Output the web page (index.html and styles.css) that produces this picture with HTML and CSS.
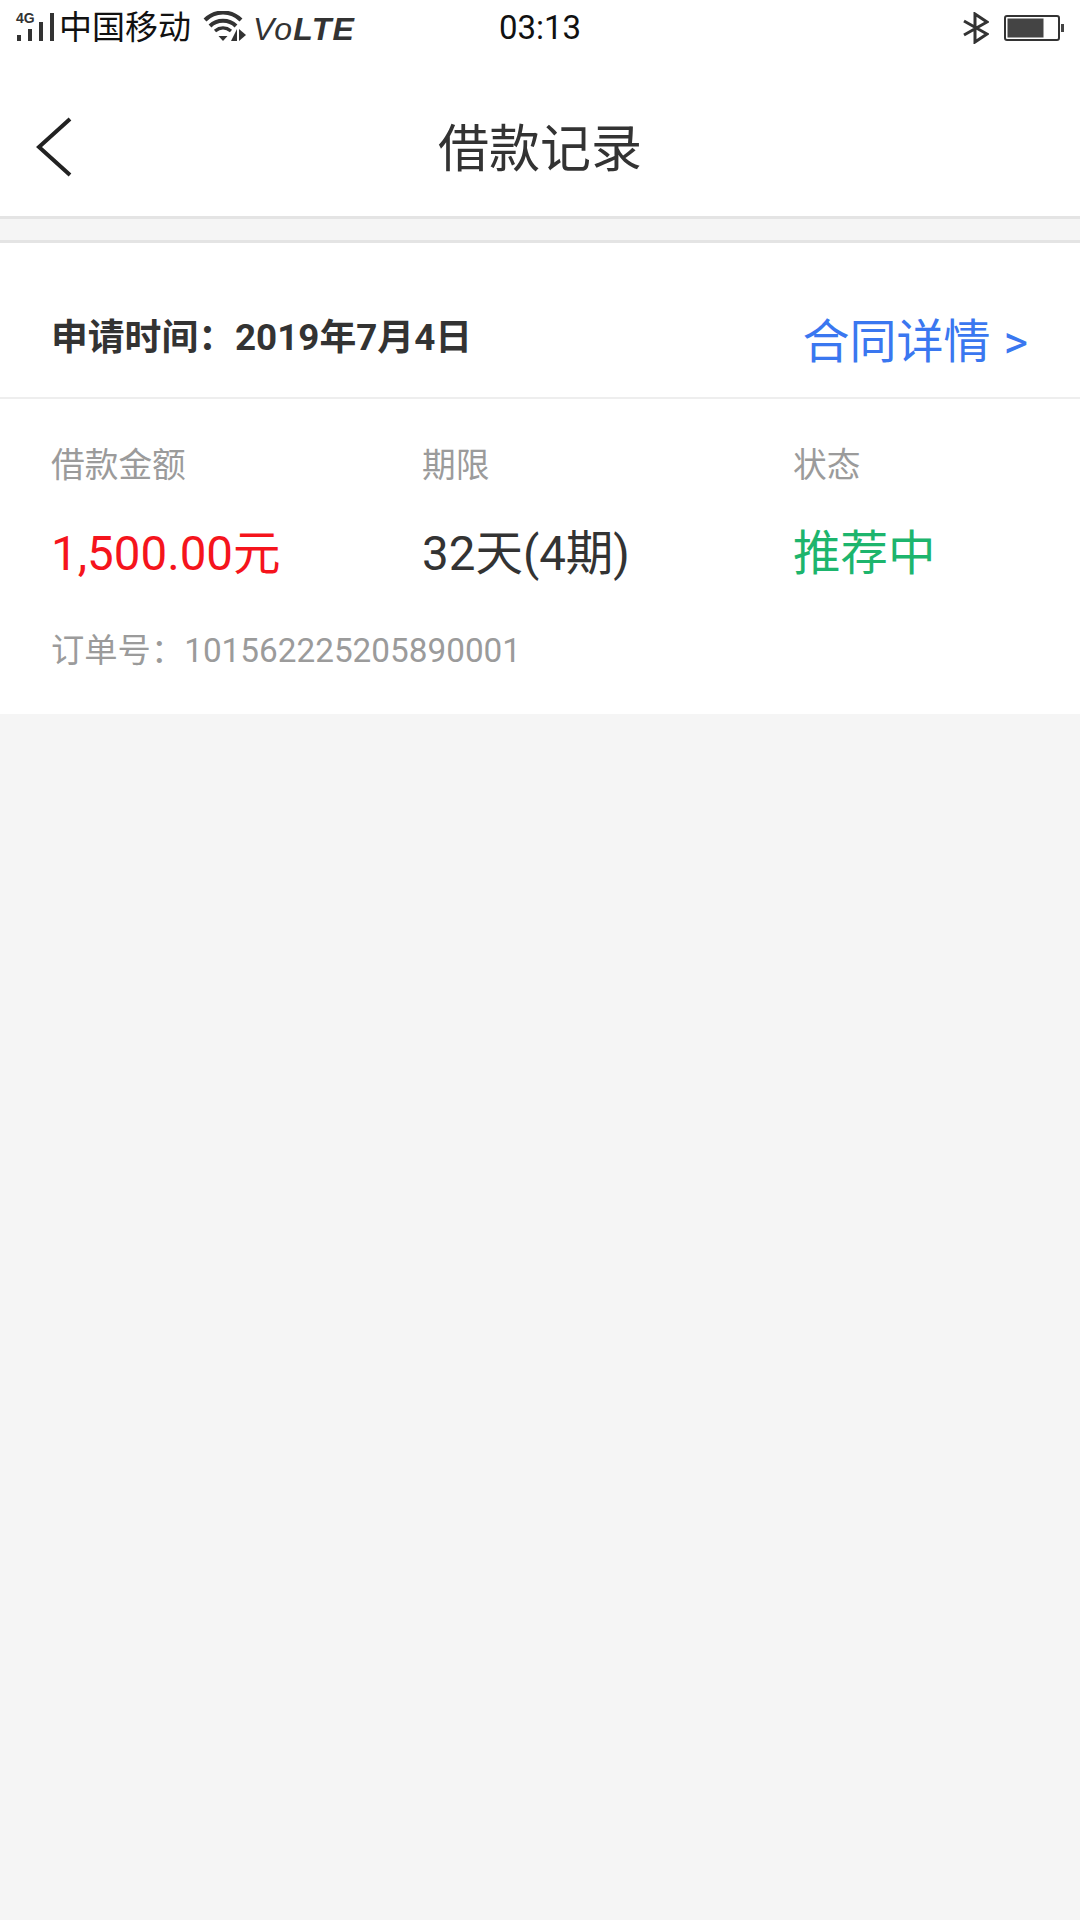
FILE: index.html
```html
<!DOCTYPE html>
<html lang="zh-CN">
<head>
<meta charset="utf-8">
<title>借款记录</title>
<link rel="stylesheet" href="styles.css">
</head>
<body>
	<div class="statusbar">
		<div class="statusLeft">
			<svg class="signalIcon" width="40" height="32" viewBox="0 0 40 32">
				<text x="1" y="12" class="signalText">4G</text>
				<rect x="2" y="24" width="4" height="6" fill="#333"/>
				<rect x="13" y="18" width="4" height="12" fill="#333"/>
				<rect x="24" y="11" width="4" height="19" fill="#333"/>
				<rect x="35" y="2" width="4" height="28" fill="#333"/>
			</svg>
			<span class="carrier">中国移动</span>
			<svg class="wifiIcon" width="46" height="32" viewBox="0 0 46 32">
				<path d="M2 9 C12 -1 28 -1 38 9" fill="none" stroke="#333" stroke-width="4"/>
				<path d="M7 15 C14 8 26 8 33 15" fill="none" stroke="#333" stroke-width="4"/>
				<path d="M12 20 C17 16 23 16 28 20" fill="none" stroke="#333" stroke-width="3.500"/>
				<path d="M15.500 25 L24.500 25 L20 30 Z" fill="#333"/>
				<path d="M34 18 L34 30 L28 30 Z" fill="#333"/>
				<path d="M36 18 L36 30 L43 24 Z" fill="#333"/>
			</svg>
			<span class="volte">Vo<b>LTE</b></span>
		</div>
		<div class="clock">03:13</div>
		<div class="statusRight">
			<svg class="btIcon" width="26" height="32" viewBox="0 0 26 32">
				<path d="M1 23 L24 10 L12 2 L12 30 L24 22 L1 9" fill="none" stroke="#333" stroke-width="3"/>
			</svg>
			<svg class="batteryIcon" width="62" height="26" viewBox="0 0 62 26">
				<rect x="1" y="1" width="54" height="24" rx="2" fill="none" stroke="#333" stroke-width="2"/>
				<rect x="3.500" y="3.500" width="36" height="19" fill="#444"/>
				<rect x="57" y="9" width="3" height="8" fill="#444"/>
			</svg>
		</div>
	</div>

	<div class="navbar">
		<svg class="backIcon" width="40" height="64" viewBox="0 0 40 64">
			<path d="M35 3 L4 31 L35 59" fill="none" stroke="#222" stroke-width="4"/>
		</svg>
		<h1 class="pageTitle">借款记录</h1>
		<div></div>
	</div>

	<div class="spacer"></div>

	<div class="record">
		<div class="recordHead">
			<span class="applyTime">申请时间：2019年7月4日</span>
			<a class="contractLink">合同详情<span class="arrow">&gt;</span></a>
		</div>
		<div class="recordBody">
			<div class="columns">
				<div class="col">
					<div class="label">借款金额</div>
					<div class="value amount">1,500.00元</div>
				</div>
				<div class="col">
					<div class="label">期限</div>
					<div class="value">32天(4期)</div>
				</div>
				<div class="col">
					<div class="label">状态</div>
					<div class="value state">推荐中</div>
				</div>
			</div>
			<div class="orderNo">订单号：101562225205890001</div>
		</div>
	</div>
</body>
</html>
```

FILE: styles.css
```css
html, body {
	margin: 0;
	padding: 0;
}

body {
	width: 1080px;
	height: 1920px;
	background-color: #f5f5f5;
	font-family: Roboto, "Noto Sans CJK SC", sans-serif;
	color: #333;
	overflow: hidden;
}

.statusbar {
	display: grid;
	grid-template-columns: 1fr auto 1fr;
	align-items: center;
	height: 56px;
	background-color: #fff;
}

.statusLeft {
	display: flex;
	align-items: center;
	padding-left: 15px;
}

.signalIcon {
	display: block;
	margin-top: -2px;
}

.signalText {
	font-family: "Liberation Sans", sans-serif;
	font-size: 14px;
	font-weight: bold;
	fill: #333;
}

.carrier {
	margin-left: 4px;
	font-size: 33px;
	line-height: 40px;
	color: #111;
}

.wifiIcon {
	display: block;
	margin-left: 12px;
	margin-top: -2px;
}

.volte {
	margin-left: 4px;
	margin-top: 1px;
	font-family: "Liberation Sans", sans-serif;
	font-size: 32px;
	font-style: italic;
	letter-spacing: 1.200px;
	line-height: 40px;
	color: #333;
}

.clock {
	font-size: 33px;
	line-height: 40px;
	color: #111;
}

.statusRight {
	display: flex;
	align-items: center;
	justify-content: flex-end;
	padding-right: 14px;
}

.btIcon {
	display: block;
	margin-right: 15px;
}

.batteryIcon {
	display: block;
}

.navbar {
	display: grid;
	grid-template-columns: 1fr auto 1fr;
	align-items: center;
	height: 132px;
	padding-top: 28px;
	background-color: #fff;
	border-bottom: 3px solid #e4e4e4;
}

.backIcon {
	display: block;
	margin-left: 35px;
	margin-top: -4px;
}

.pageTitle {
	margin: 0;
	font-size: 51px;
	font-weight: normal;
	line-height: 60px;
	color: #333;
}

.spacer {
	height: 21px;
	border-bottom: 3px solid #e4e4e4;
}

.record {
	background-color: #fff;
}

.recordHead {
	display: flex;
	justify-content: space-between;
	height: 154px;
	padding: 0 52px 0 51px;
	border-bottom: 2px solid #eee;
}

.applyTime {
	margin-top: 73px;
	font-size: 36.800px;
	font-weight: bold;
	line-height: 44px;
}

.contractLink {
	margin-top: 70px;
	font-size: 47px;
	line-height: 58px;
	color: #3a77f0;
}

.arrow {
	margin-left: 13px;
}

.recordBody {
	padding: 43px 0 39px 51px;
}

.columns {
	display: grid;
	grid-template-columns: 371px 371px 1fr;
}

.label {
	font-size: 33.700px;
	line-height: 48px;
	color: #9b9b9b;
}

.value {
	margin-top: 29px;
	font-size: 47.500px;
	line-height: 70px;
	color: #333;
}

.amount {
	color: #f5141c;
}

.state {
	color: #1db56d;
}

.orderNo {
	margin-top: 38px;
	font-size: 33.300px;
	line-height: 48px;
	color: #9b9b9b;
}
```
